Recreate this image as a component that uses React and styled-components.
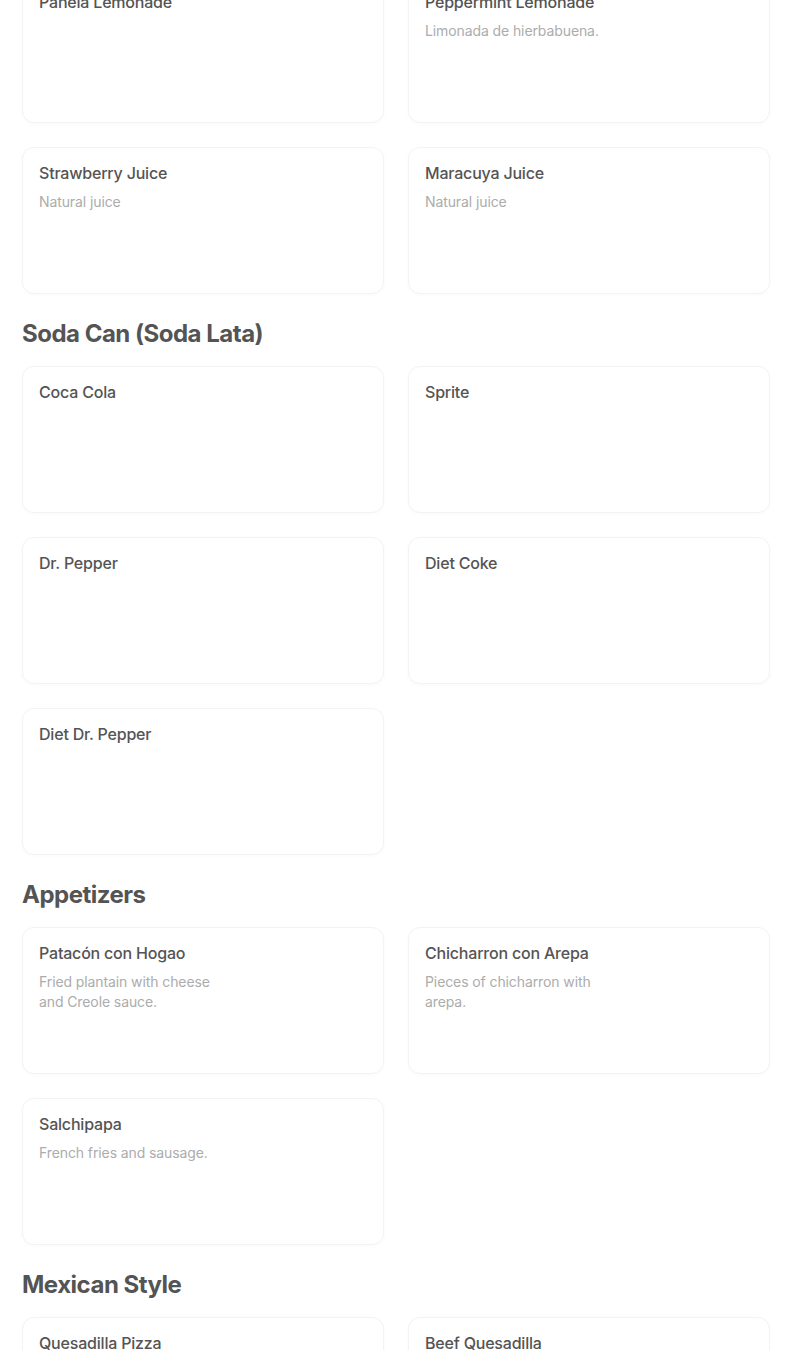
import React from "react";
import styled, { createGlobalStyle } from "styled-components";

const GlobalStyle = createGlobalStyle`
  * { box-sizing: border-box; }
  body {
    margin: 0;
    background: #ffffff;
    font-family: Inter, "Liberation Sans", sans-serif;
    overflow: hidden;
  }
`;

const Page = styled.main`
  margin-top: -24px;
  padding: 0 34px 0 22px;
`;

const Section = styled.section``;

const SectionTitle = styled.h2`
  margin: 24px 0 16px;
  font-size: 24px;
  line-height: 32px;
  font-weight: 700;
  letter-spacing: -0.5px;
  color: #545454;
`;

const Grid = styled.div`
  display: grid;
  grid-template-columns: 1fr 1fr;
  gap: 24px;
`;

const Card = styled.div`
  height: 147px;
  padding: 15px 16px 16px;
  border: 1px solid #f3f3f3;
  border-radius: 12px;
  background: #fff;
  box-shadow: 0 1px 4px rgba(0, 0, 0, 0.025);
`;

const ItemName = styled.div`
  font-size: 16px;
  line-height: 20px;
  font-weight: 500;
  letter-spacing: -0.2px;
  color: #545454;
`;

const ItemDesc = styled.div`
  margin-top: 9px;
  max-width: 180px;
  font-size: 14px;
  line-height: 20px;
  letter-spacing: -0.1px;
  color: #acacac;
`;

const menu = [
  {
    items: [
      { name: "Panela Lemonade" },
      { name: "Peppermint Lemonade", desc: "Limonada de hierbabuena." },
      { name: "Strawberry Juice", desc: "Natural juice" },
      { name: "Maracuya Juice", desc: "Natural juice" }
    ]
  },
  {
    title: "Soda Can (Soda Lata)",
    items: [
      { name: "Coca Cola" },
      { name: "Sprite" },
      { name: "Dr. Pepper" },
      { name: "Diet Coke" },
      { name: "Diet Dr. Pepper" }
    ]
  },
  {
    title: "Appetizers",
    items: [
      {
        name: "Patacón con Hogao",
        desc: "Fried plantain with cheese and Creole sauce."
      },
      { name: "Chicharron con Arepa", desc: "Pieces of chicharron with arepa." },
      { name: "Salchipapa", desc: "French fries and sausage." }
    ]
  },
  {
    title: "Mexican Style",
    items: [{ name: "Quesadilla Pizza" }, { name: "Beef Quesadilla" }]
  }
];

const App = () => (
  <>
    <GlobalStyle />
    <Page>
      {menu.map((section, i) => (
        <Section key={i}>
          {section.title && <SectionTitle>{section.title}</SectionTitle>}
          <Grid>
            {section.items.map(item => (
              <Card key={item.name}>
                <ItemName>{item.name}</ItemName>
                {item.desc && <ItemDesc>{item.desc}</ItemDesc>}
              </Card>
            ))}
          </Grid>
        </Section>
      ))}
    </Page>
  </>
);

export default App;
